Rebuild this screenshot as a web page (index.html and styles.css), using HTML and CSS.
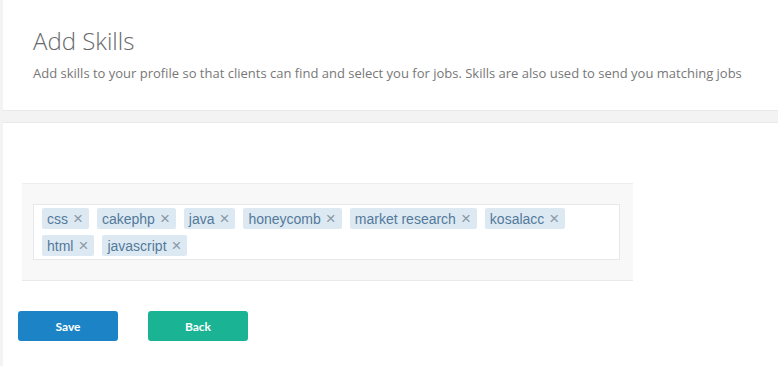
FILE: index.html
```html
<!DOCTYPE html>
<html lang="en">
<head>
  <meta charset="UTF-8">
  <meta name="viewport" content="width=device-width, initial-scale=1.0">
  <title>Add Skills</title>
  <link rel="stylesheet" href="styles.css">
</head>
<body>
  <header class="page-head">
    <h1>Add Skills</h1>
    <p>Add skills to your profile so that clients can find and select you for jobs. Skills are also used to send you matching jobs</p>
  </header>

  <main class="panel">
    <div class="tag-field">
      <div class="tag-input">
        <span class="tag">css <span class="remove">&times;</span></span>
        <span class="tag">cakephp <span class="remove">&times;</span></span>
        <span class="tag">java <span class="remove">&times;</span></span>
        <span class="tag">honeycomb <span class="remove">&times;</span></span>
        <span class="tag">market research <span class="remove">&times;</span></span>
        <span class="tag">kosalacc <span class="remove">&times;</span></span>
        <span class="tag">html <span class="remove">&times;</span></span>
        <span class="tag">javascript <span class="remove">&times;</span></span>
      </div>
    </div>

    <div class="actions">
      <button class="btn btn-save">Save</button>
      <button class="btn btn-back">Back</button>
    </div>
  </main>
</body>
</html>
```

FILE: styles.css
```css
body {
  margin: 0;
  background-color: #f3f3f4;
  font-family: 'Open Sans', sans-serif;
  color: #676a6c;
}

.page-head {
  background-color: #fff;
  margin-left: 3px;
  height: 111px;
  box-sizing: border-box;
  padding: 25px 30px 0 30px;
  border-bottom: 1px solid #e7eaec;
}

.page-head h1 {
  margin: 0;
  font-size: 24px;
  font-weight: 300;
  color: #676a6c;
  line-height: 32px;
}

.page-head p {
  margin: 7px 0 0 0;
  font-size: 13px;
  line-height: 18px;
  color: #777;
}

.panel {
  background-color: #fff;
  margin: 11px 0 0 3px;
  border-top: 1px solid #e7eaec;
  padding: 60px 0 26px 0;
}

.tag-field {
  width: 611px;
  box-sizing: border-box;
  margin-left: 19px;
  padding: 20px 13px 20px 11px;
  background-color: #f8f8f8;
  border-top: 1px solid #eeeeee;
  border-bottom: 1px solid #e9e9e9;
}

.tag-input {
  background-color: #fff;
  border: 1px solid #e8e8e8;
  height: 56px;
  box-sizing: border-box;
  padding: 3px 8px;
  display: flex;
  flex-wrap: wrap;
  align-content: flex-start;
  gap: 6px 8px;
}

.tag {
  display: inline-flex;
  align-items: center;
  height: 21px;
  padding: 0 6px 0 5px;
  background-color: #dde9f2;
  border-radius: 2px;
  font-family: 'Liberation Sans', Arial, sans-serif;
  font-size: 14px;
  color: #53799a;
}

.remove {
  margin-left: 5px;
  font-size: 17px;
  line-height: 1;
  color: #8a99a6;
}

.actions {
  display: flex;
  gap: 30px;
  margin: 30px 0 0 15px;
}

.btn {
  width: 100px;
  height: 30px;
  border: none;
  border-radius: 3px;
  color: #fff;
  font-family: 'Lato', sans-serif;
  font-weight: 700;
  font-size: 12px;
  cursor: pointer;
}

.btn-save {
  background-color: #1c84c6;
}

.btn-back {
  background-color: #1ab394;
}
```
